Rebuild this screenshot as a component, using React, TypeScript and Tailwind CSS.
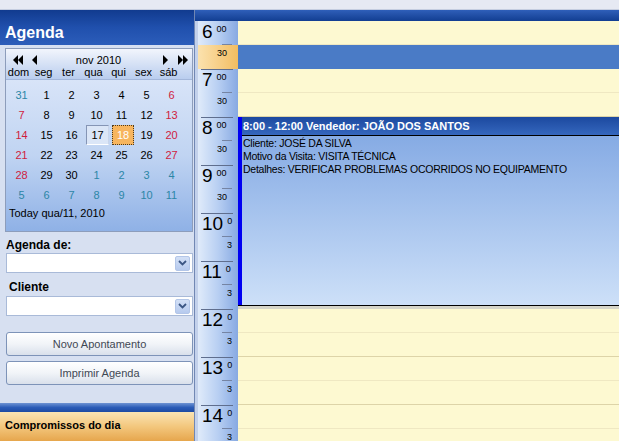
import React from 'react'

const hours = [6, 7, 8, 9, 10, 11, 12, 13, 14]

type Day = { n: number; kind: 'normal' | 'weekend' | 'other' }

const weeks: Day[][] = [
  [31, 1, 2, 3, 4, 5, 6],
  [7, 8, 9, 10, 11, 12, 13],
  [14, 15, 16, 17, 18, 19, 20],
  [21, 22, 23, 24, 25, 26, 27],
  [28, 29, 30, 1, 2, 3, 4],
  [5, 6, 7, 8, 9, 10, 11],
].map((row, r) =>
  row.map((n, c) => {
    const other = (r === 0 && n > 7) || (r >= 4 && n < 20)
    if (other) return { n, kind: 'other' as const }
    if (c === 0 || c === 6) return { n, kind: 'weekend' as const }
    return { n, kind: 'normal' as const }
  })
)

const weekdays = ['dom', 'seg', 'ter', 'qua', 'qui', 'sex', 'sáb']

function TriLeft({ double }: { double?: boolean }) {
  return double ? (
    <svg width="10" height="10" viewBox="0 0 10 10">
      <polygon points="5,0 0,5 5,10" fill="#000" />
      <polygon points="10,0 5,5 10,10" fill="#000" />
    </svg>
  ) : (
    <svg width="6" height="10" viewBox="0 0 6 10">
      <polygon points="5,0 0,5 5,10" fill="#000" />
    </svg>
  )
}

function TriRight({ double }: { double?: boolean }) {
  return double ? (
    <svg width="10" height="10" viewBox="0 0 10 10">
      <polygon points="0,0 5,5 0,10" fill="#000" />
      <polygon points="5,0 10,5 5,10" fill="#000" />
    </svg>
  ) : (
    <svg width="6" height="10" viewBox="0 0 6 10">
      <polygon points="1,0 6,5 1,10" fill="#000" />
    </svg>
  )
}

function Calendar() {
  return (
    <div className="ml-[5px] mt-[3px] w-[188px] border border-[#8d9dbb]">
      {/* month nav + weekday names */}
      <div className="h-[31px] pt-[5px] bg-gradient-to-b from-[#f2f5fc] to-[#b9cdee] border-b border-[#a3b7db]">
        <div className="h-[12px] flex items-center pl-[7px] pr-[4px]">
          <TriLeft double />
          <span className="ml-[9px] flex"><TriLeft /></span>
          <span className="flex-1 text-center leading-[12px] pr-[3px]">nov 2010</span>
          <TriRight />
          <span className="ml-[10px] flex"><TriRight double /></span>
        </div>
        <div className="grid grid-cols-[repeat(7,25px)] leading-[13px]">
          {weekdays.map((d) => (
            <span key={d} className="text-center">{d}</span>
          ))}
        </div>
      </div>

      {/* days */}
      <div className="h-[151px] pt-[5px] pl-[3px] bg-gradient-to-b from-[#d8e4f8] via-[#c0d4f2] to-[#8fb1e6]">
        <div className="grid grid-cols-[repeat(7,25px)] auto-rows-[20px]">
          {weeks.flat().map((d, i) => {
            const color =
              d.kind === 'other' ? 'text-[#2c86a6]' : d.kind === 'weekend' ? 'text-[#d01c3e]' : 'text-black'
            if (d.kind === 'normal' && d.n === 17)
              return (
                <div key={i} className="flex items-center">
                  <span className="ml-[2px] w-[23px] h-[20px] flex items-center justify-center border border-t-[#8595b5] border-l-[#8595b5] border-b-white border-r-[#c9d5ea] bg-[#dbe6f7]">
                    17
                  </span>
                </div>
              )
            if (d.kind === 'normal' && d.n === 18)
              return (
                <div key={i} className="flex items-center">
                  <span className="ml-[3px] w-[22px] h-[20px] flex items-center justify-center border border-dotted border-[#4a3a20] bg-[#f7b55e] text-white">
                    18
                  </span>
                </div>
              )
            return (
              <div key={i} className={`flex items-center justify-center ${color}`}>
                {d.n}
              </div>
            )
          })}
        </div>
        <div className="mt-[2px] leading-[13px]">Today qua/11, 2010</div>
      </div>
    </div>
  )
}

function Select() {
  return (
    <div className="ml-[6px] w-[187px] h-[20px] bg-white border border-[#a9bad8] flex items-center justify-end pr-[2px]">
      <div className="w-[15px] h-[15px] rounded-[2px] bg-gradient-to-b from-[#d3e0f6] to-[#b6caee] border border-[#b3c6e8] flex items-center justify-center">
        <svg width="9" height="6" viewBox="0 0 9 6">
          <polyline points="1,1 4.5,4.5 8,1" fill="none" stroke="#3b5684" strokeWidth="1.8" />
        </svg>
      </div>
    </div>
  )
}

function Button({ label }: { label: string }) {
  return (
    <div className="ml-[6px] w-[187px] h-[24px] rounded-[3px] border border-[#7d93b8] bg-gradient-to-b from-white via-[#f1f4f8] to-[#d9e0eb] flex items-center justify-center text-[#3f4854]">
      {label}
    </div>
  )
}

function LeftPanel() {
  return (
    <div className="w-[195px] shrink-0 flex flex-col bg-[#d7e0f1] border-r border-[#7187b3]">
      <div className="h-[35px] shrink-0 pt-[14px] pl-[5px] bg-gradient-to-b from-[#113b8f] via-[#2050ad] to-[#2c5dba] text-white font-bold text-[16px] leading-[18px]">
        Agenda
      </div>

      <Calendar />

      <div className="mt-[6px] ml-[6px] font-bold text-[12px] leading-[14px]">Agenda de:</div>
      <div className="mt-[1px]">
        <Select />
      </div>
      <div className="mt-[7px] ml-[9px] font-bold text-[12px] leading-[14px]">Cliente</div>
      <div className="mt-[2px]">
        <Select />
      </div>

      <div className="mt-[16px]">
        <Button label="Novo Apontamento" />
      </div>
      <div className="mt-[5px]">
        <Button label="Imprimir Agenda" />
      </div>

      <div className="mt-auto shrink-0">
        <div className="h-[9px] bg-gradient-to-b from-[#6e93d3] via-[#2c5cb7] to-[#1c4aa2]" />
        <div className="h-[29px] pt-[7px] pl-[5px] bg-gradient-to-b from-[#fae4b3] via-[#f3c77d] to-[#e6a64c] font-bold leading-[13px]">
          Compromissos do dia
        </div>
      </div>
    </div>
  )
}

function TimeColumn() {
  return (
    <div className="w-[40px] shrink-0 overflow-hidden bg-gradient-to-r from-[#e0ebfa] via-[#b8cff2] to-[#87a9e2]">
      {hours.map((h) => {
        const wide = h >= 10
        return (
          <div key={h}>
            <div className="relative h-[24px]">
              {h !== 6 && <div className="absolute top-0 left-[3px] w-[32px] h-px bg-[#5f6e8e]" />}
              <div className="flex items-start pl-[4px] whitespace-nowrap">
                <span className="shrink-0 text-[19px] leading-[22px]">{h}</span>
                <span className="shrink-0 ml-[4px] pt-[3px] text-[9px] leading-[10px]">{wide ? '0' : '00'}</span>
              </div>
              <div className="absolute bottom-0 left-[24px] w-[10px] h-px bg-[#7584a3]" />
            </div>
            <div className={h === 6 ? 'h-[24px] bg-gradient-to-r from-[#fbe2ae] to-[#f2bd60]' : 'h-[24px]'}>
              <div
                className={
                  wide
                    ? 'whitespace-nowrap pl-[29px] pt-[3px] text-[9px] leading-[10px]'
                    : 'whitespace-nowrap pl-[19px] pt-[3px] text-[9px] leading-[10px]'
                }
              >
                {wide ? '3' : '30'}
              </div>
            </div>
          </div>
        )
      })}
    </div>
  )
}

function DayView() {
  const slots = Array.from({ length: 18 }, (_, i) => i)
  return (
    <div className="relative flex-1 overflow-hidden bg-[#fdf9d1]">
      {slots.map((i) => (
        <div
          key={i}
          className={
            i === 1
              ? 'h-[24px] bg-[#4a7bc6] border-b border-[#4a7bc6]'
              : i % 2 === 0
                ? 'h-[24px] border-b border-[#efe8c2]'
                : 'h-[24px] border-b border-[#ddd4a8]'
          }
        />
      ))}

      {/* appointment */}
      <div className="absolute left-0 right-0 top-[96px] h-[189px] flex border-b border-black shadow-[0_3px_0_#d6d5c8]">
        <div className="w-[4px] shrink-0 bg-[#0000f2]" />
        <div className="flex-1 flex flex-col min-w-0">
          <div className="h-[19px] shrink-0 border-b border-black bg-gradient-to-b from-[#1c499f] to-[#3567be] pl-[1px] text-white font-bold leading-[18px] whitespace-nowrap">
            8:00 - 12:00 Vendedor: JOÃO DOS SANTOS
          </div>
          <div className="flex-1 pt-[1px] pl-[1px] bg-gradient-to-b from-[#86abe4] to-[#cde0f8] text-[10.5px] tracking-[-0.25px] leading-[13px] whitespace-nowrap">
            <div>Cliente: JOSÉ DA SILVA</div>
            <div>Motivo da Visita: VISITA TÉCNICA</div>
            <div>Detalhes: VERIFICAR PROBLEMAS OCORRIDOS NO EQUIPAMENTO</div>
          </div>
        </div>
      </div>
    </div>
  )
}

export default function App() {
  return (
    <div className="w-[619px] h-[441px] overflow-hidden flex flex-col bg-[#e4e8f2] text-black text-[11px] font-['Liberation_Sans',Arial,sans-serif]">
      <div className="h-[10px] shrink-0 bg-[#e6e9f3] border-b border-[#c5cde0]" />
      <div className="flex flex-1 min-h-0">
        <LeftPanel />
        <div className="flex-1 flex flex-col min-w-0">
          <div className="h-[11px] shrink-0 bg-gradient-to-b from-[#2f5fb9] to-[#123e92]" />
          <div className="flex flex-1 min-h-0">
            <div className="w-[3px] shrink-0 bg-[#c3d1eb]" />
            <TimeColumn />
            <DayView />
          </div>
        </div>
      </div>
    </div>
  )
}
